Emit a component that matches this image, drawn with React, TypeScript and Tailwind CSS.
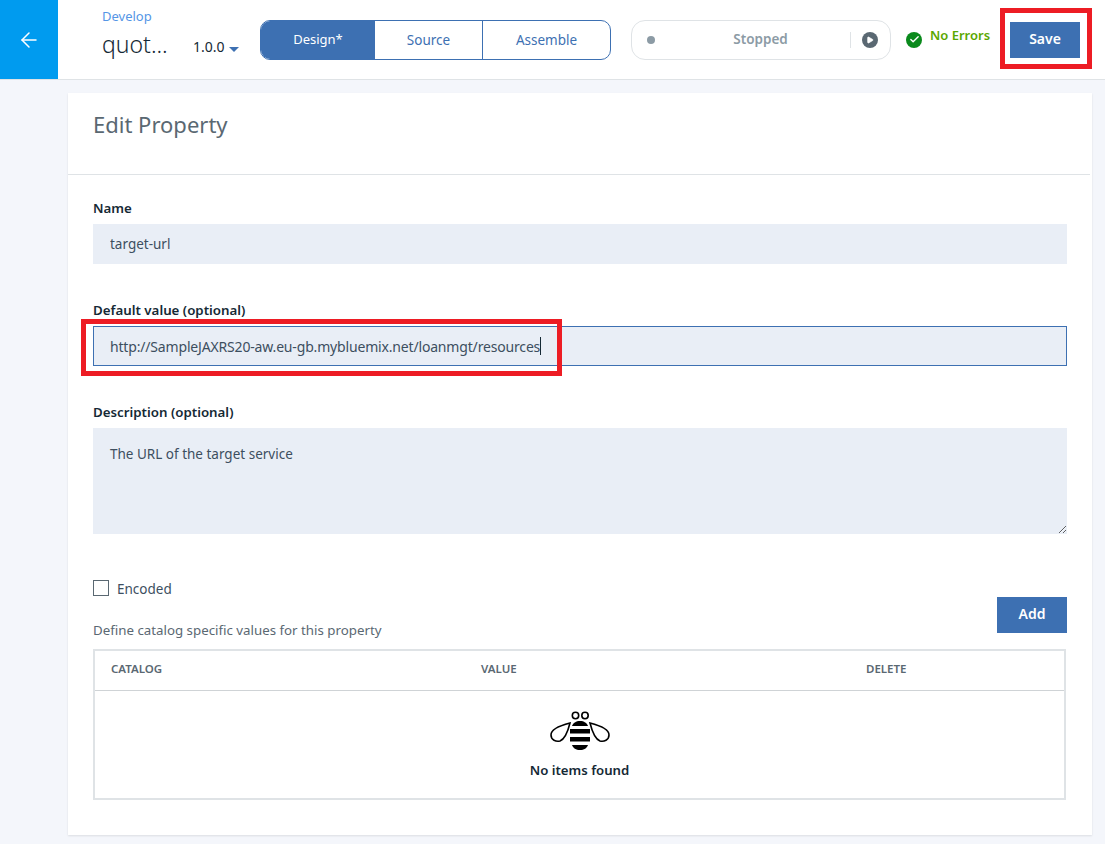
import React from 'react';
import { ArrowLeft, Check, Play } from 'lucide-react';

const font = { fontFamily: '"Noto Sans", "Liberation Sans", sans-serif' };

const Bee = () => (
    <svg width="60" height="39" viewBox="0 0 60 39" fill="none">
        <circle cx="25.5" cy="4.5" r="3.2" stroke="#000" strokeWidth="1.6" />
        <circle cx="35" cy="4.5" r="3.2" stroke="#000" strokeWidth="1.6" />
        <path d="M20 12 C12 14 1 18 1 24 C1 29 6 31 10 30 C15 28 18 20 20 12 Z" stroke="#000" strokeWidth="1.6" />
        <path d="M40 12 C48 14 59 18 59 24 C59 29 54 31 50 30 C45 28 42 20 40 12 Z" stroke="#000" strokeWidth="1.6" />
        <path d="M22 15 C23 12 26 10 30 10 C34 10 37 12 38 15 Z" fill="#000" />
        <rect x="20" y="18" width="20" height="4.5" fill="#000" />
        <rect x="20" y="26" width="20" height="4.5" fill="#000" />
        <path d="M22 34 H38 C37 37 34 39 30 39 C26 39 23 37 22 34 Z" fill="#000" />
    </svg>
);

const App: React.FC = () => {
    return (
        <div className="h-[844px] w-[1105px] overflow-hidden bg-[#f4f6fb] text-[#152935]" style={font}>
            {/* Header */}
            <header className="flex h-[80px] items-center border-b border-[#dfe3e6] bg-white">
                <div className="flex h-[79px] w-[58px] items-center justify-center bg-[#009bef]">
                    <ArrowLeft size={24} strokeWidth={1.5} className="text-white" />
                </div>
                <div className="ml-[44px] w-[158px] self-start pt-[7px]">
                    <div className="text-[13px] leading-[18px] text-[#5596e6]">Develop</div>
                    <div className="mt-[3px] flex items-center">
                        <span className="w-[91px] text-[23px] font-light leading-[32px] text-[#152935]">quot...</span>
                        <span className="mt-[4px] text-[14px] text-[#152935]">1.0.0</span>
                        <span className="mt-[11px] ml-[4px] h-0 w-0 border-x-[5px] border-t-[5px] border-x-transparent border-t-[#3d70b2]" />
                    </div>
                </div>
                <div className="flex h-[40px] w-[351px] overflow-hidden rounded-[10px] border border-[#3d70b2] text-[13.5px] text-[#3d70b2]">
                    <div className="flex w-[114px] items-center justify-center bg-[#3d70b2] pt-[1px] text-[13px] text-white">Design*</div>
                    <div className="flex w-[108px] items-center justify-center border-r border-[#3d70b2] pt-[1px]">Source</div>
                    <div className="flex flex-1 items-center justify-center pt-[1px]">Assemble</div>
                </div>
                <div className="ml-[20px] flex h-[40px] w-[260px] items-center rounded-[14px] border border-[#dfe3e6] pl-[15px] pr-[12px]">
                    <span className="h-[8px] w-[8px] rounded-full bg-[#8c9ba5]" />
                    <span className="flex-1 pl-[16px] text-center text-[13.5px] font-semibold text-[#8c9ba5]">Stopped</span>
                    <span className="mr-[11px] h-[16px] w-px bg-[#dfe3e6]" />
                    <span className="flex h-[16px] w-[16px] items-center justify-center rounded-full bg-[#5a6872]">
                        <Play size={8} className="fill-white text-white" />
                    </span>
                </div>
                <div className="ml-[15px] flex h-[16px] w-[16px] items-center justify-center rounded-full bg-[#0a8a1c]">
                    <Check size={11} strokeWidth={3} className="text-white" />
                </div>
                <span className="mb-[7px] ml-[8px] w-[80px] text-[13px] font-semibold text-[#5aa700]">No Errors</span>
                <button className="h-[36px] w-[70px] bg-[#3d70b2] pb-[2px] text-[14px] font-semibold text-white">Save</button>
            </header>

            {/* Card */}
            <main className="ml-[68px] mt-[13px] h-[742px] w-[1024px] bg-white shadow-[0_1px_2px_rgba(0,0,0,0.1)]">
                <div className="mr-[2px] flex h-[82px] items-center border-b border-[#dfe3e6] pb-[18px] pl-[25px]">
                    <h1 className="text-[22px] text-[#5a6872]">Edit Property</h1>
                </div>

                <div className="relative px-[25px] pt-[23px]">
                    <label className="block text-[13.3px] font-semibold leading-[20px]">Name</label>
                    <input
                        readOnly
                        value="target-url"
                        className="mt-[6px] block h-[40px] w-[974px] bg-[#e9eef6] px-[17px] pb-[1px] text-[13.5px] text-[#3d4f5f] outline-none"
                    />

                    <label className="mt-[36px] block text-[13.3px] font-semibold leading-[20px]">Default value (optional)</label>
                    <div className="mt-[6px] flex h-[40px] w-[974px] items-center border border-[#3d70b2] bg-[#e9eef6] px-[16px] text-[14px] text-[#3d4f5f]">
                        <span className="tracking-[-0.17px]">http://SampleJAXRS20-aw.eu-gb.mybluemix.net/loanmgt/resources</span>
                        <span className="h-[18px] w-px bg-[#152935]" />
                    </div>

                    <label className="mt-[36px] block text-[13.3px] font-semibold leading-[20px]">Description (optional)</label>
                    <textarea
                        readOnly
                        value="The URL of the target service"
                        className="mt-[6px] block h-[106px] w-[974px] bg-[#e9eef6] px-[17px] pb-[15px] pt-[16px] text-[13.5px] leading-[20px] text-[#3d4f5f] outline-none"
                    />

                    <div className="mt-[45px] flex items-start justify-between">
                        <div>
                            <div className="flex items-center">
                                <span className="-mt-[3px] h-[16px] w-[16px] border border-[#5a6872] bg-white" />
                                <span className="ml-[8px] text-[13.5px] text-[#3d4f5f]">Encoded</span>
                            </div>
                            <div className="mt-[21px] text-[13.3px] leading-[20px] text-[#5a6872]">Define catalog specific values for this property</div>
                        </div>
                        <button className="mt-[18px] h-[36px] w-[70px] bg-[#3d70b2] pb-[3px] text-[14px] font-semibold text-white">Add</button>
                    </div>

                    {/* Catalog table */}
                    <div className="mt-[9px] h-[151px] w-[973px] border-2 border-[#dfe3e6]">
                        <div className="flex h-[40px] items-center border-b border-[#cfd3d6] pb-[4px] text-[11.5px] font-semibold text-[#5a6872]">
                            <span className="ml-[16px] w-[370px]">CATALOG</span>
                            <span className="w-[385px]">VALUE</span>
                            <span>DELETE</span>
                        </div>
                        <div className="flex flex-col items-center pt-[20px]">
                            <Bee />
                            <div className="mt-[10px] text-[13.2px] font-semibold leading-[20px]">No items found</div>
                        </div>
                    </div>

                    {/* Callout boxes from the screenshot annotation */}
                    <div className="absolute left-[13px] top-[144px] h-[57px] w-[481px] border-[5px] border-[#ed1c24]" />
                </div>
            </main>

            <div className="absolute left-[1000px] top-[8px] h-[61px] w-[92px] border-[5px] border-[#ed1c24]" />
        </div>
    );
};

export default App;
